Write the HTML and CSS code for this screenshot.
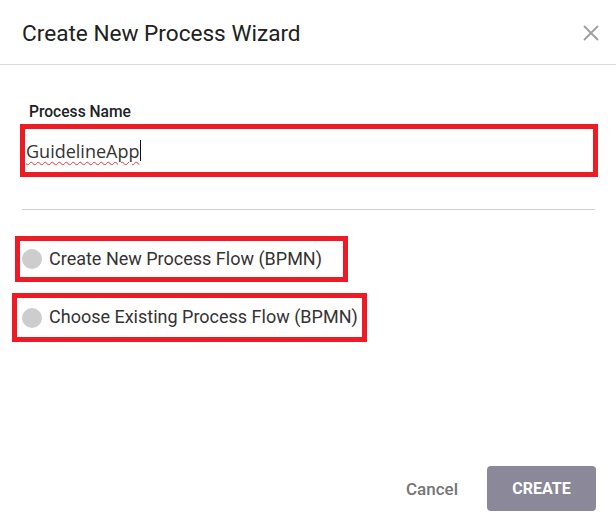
FILE: index.html
```html
<!DOCTYPE html>
<html>
<head>
<meta charset="utf-8">
<link rel="stylesheet" href="styles.css">
</head>
<body>
<div class="dialog">
  <div class="header">
    <div class="title">Create New Process Wizard</div>
    <svg class="close" width="16" height="16" viewBox="0 0 16 16"><path d="M1 1L15 15M15 1L1 15" stroke="#9e9e9e" stroke-width="1.8" fill="none"/></svg>
  </div>
  <div class="main">
    <div class="label">Process Name</div>
    <div class="input"><span class="value">GuidelineApp</span><span class="caret"></span></div>
    <div class="rule"></div>
    <div class="option opt1"><span class="radio"></span><span class="opt-text">Create New Process Flow (BPMN)</span></div>
    <div class="option opt2"><span class="radio"></span><span class="opt-text">Choose Existing Process Flow (BPMN)</span></div>
  </div>
  <div class="footer">
    <div class="cancel">Cancel</div>
    <div class="create">CREATE</div>
  </div>
</div>
</body>
</html>
```
FILE: styles.css
```css
html, body {
  margin: 0;
  padding: 0;
  background: #fff;
}
.dialog {
  width: 616px;
  height: 529px;
  display: flex;
  flex-direction: column;
  font-family: Roboto, "Liberation Sans", sans-serif;
  color: #222;
}
.header {
  height: 64px;
  display: flex;
  align-items: center;
  justify-content: space-between;
  padding: 0 17px 0 22px;
  border-bottom: 1px solid #dcdcdc;
}
.title {
  font-size: 22.6px;
  color: #212121;
  margin-top: 3px;
}
.close {
  margin-top: 2px;
}
.main {
  flex: 1;
  display: flex;
  flex-direction: column;
  align-items: flex-start;
}
.label {
  margin: 38px 0 0 29px;
  font-size: 15.6px;
  line-height: 18px;
  font-weight: 500;
  color: #222;
}
.input {
  margin: 3px 0 0 20px;
  width: 578px;
  height: 53px;
  box-sizing: border-box;
  border: 5px solid #ed1c24;
  display: flex;
  align-items: center;
  padding-left: 1px;
}
.value {
  font-family: "Open Sans", "Noto Sans", sans-serif;
  font-size: 18px;
  color: #333;
  text-decoration: underline wavy #e53935;
  text-decoration-thickness: 1px;
  text-underline-offset: 3px;
}
.caret {
  width: 1px;
  height: 21px;
  background: #111;
  margin-left: 1px;
}
.rule {
  margin: 32px 0 0 22px;
  width: 573px;
  height: 1px;
  background: #cfcfcf;
}
.option {
  box-sizing: border-box;
  border: 5px solid #ed1c24;
  display: flex;
  align-items: center;
}
.opt1 {
  margin: 26px 0 0 15px;
  width: 333px;
  height: 46px;
  padding-left: 2px;
}
.opt2 {
  margin: 11px 0 0 12px;
  width: 355px;
  height: 49px;
  padding-left: 5px;
}
.radio {
  width: 20px;
  height: 20px;
  border-radius: 50%;
  background: #cdcdcd;
  flex: none;
}
.opt-text {
  margin-left: 7px;
  font-size: 18px;
  color: #333;
  margin-top: -2px;
}
.footer {
  display: flex;
  justify-content: flex-end;
  align-items: center;
  padding: 0 20px 18px 0;
  gap: 29px;
}
.cancel {
  font-size: 17px;
  font-weight: 500;
  color: #757575;
}
.create {
  width: 109px;
  height: 45px;
  border-radius: 4px;
  background: #8a8899;
  color: #fff;
  font-size: 16px;
  font-weight: 700;
  display: flex;
  align-items: center;
  justify-content: center;
}
```
